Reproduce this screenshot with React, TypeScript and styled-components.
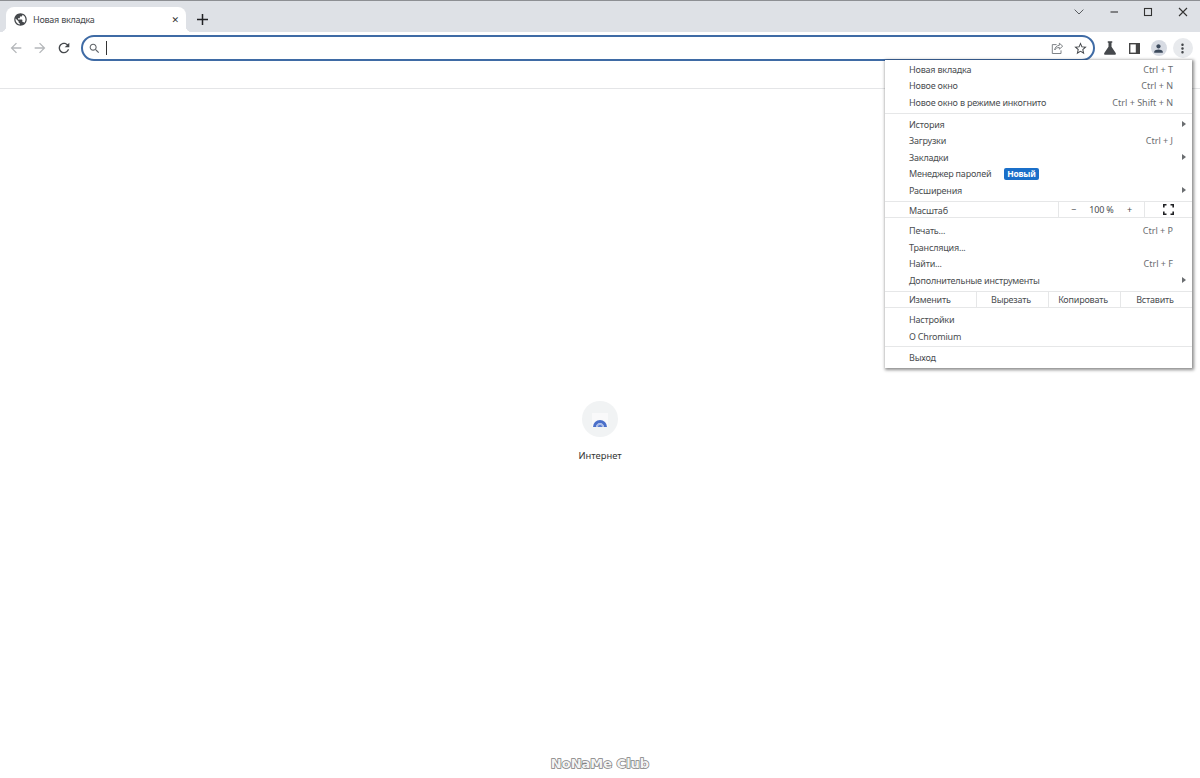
import styled, { createGlobalStyle } from "styled-components"

const GlobalStyle = createGlobalStyle`
  html, body {
    margin: 0;
    padding: 0;
    background: #fff;
    font-family: "Noto Sans", "Open Sans", sans-serif;
    color: #3c4043;
  }
  #root { height: 778px; overflow: hidden; }
`

type MenuRow = { label: string; hint?: string; arrow?: boolean; badge?: string }

const sections: MenuRow[][] = [
  [
    { label: "Новая вкладка", hint: "Ctrl + T" },
    { label: "Новое окно", hint: "Ctrl + N" },
    { label: "Новое окно в режиме инкогнито", hint: "Ctrl + Shift + N" },
  ],
  [
    { label: "История", arrow: true },
    { label: "Загрузки", hint: "Ctrl + J" },
    { label: "Закладки", arrow: true },
    { label: "Менеджер паролей", badge: "Новый" },
    { label: "Расширения", arrow: true },
  ],
]

const sectionsAfterZoom: MenuRow[] = [
  { label: "Печать...", hint: "Ctrl + P" },
  { label: "Трансляция..." },
  { label: "Найти...", hint: "Ctrl + F" },
  { label: "Дополнительные инструменты", arrow: true },
]

const Icon = ({ d, size = 16, color = "#5f6368" }: { d: string; size?: number; color?: string }) => (
  <svg width={size} height={size} viewBox="0 0 24 24" fill={color}>
    <path d={d} />
  </svg>
)

const ICONS = {
  globe: "M12 2C6.48 2 2 6.48 2 12s4.48 10 10 10 10-4.48 10-10S17.52 2 12 2zm-1 17.93c-3.95-.49-7-3.85-7-7.93 0-.62.08-1.21.21-1.79L9 15v1c0 1.1.9 2 2 2v1.93zm6.9-2.54c-.26-.81-1-1.39-1.9-1.39h-1v-3c0-.55-.45-1-1-1H8v-2h2c.55 0 1-.45 1-1V7h2c1.1 0 2-.9 2-2v-.41c2.93 1.19 5 4.06 5 7.41 0 2.08-.8 3.97-2.1 5.39z",
  back: "M20 11H7.83l5.59-5.59L12 4l-8 8 8 8 1.41-1.41L7.83 13H20v-2z",
  forward: "M12 4l-1.41 1.41L16.17 11H4v2h12.17l-5.58 5.59L12 20l8-8z",
  reload: "M17.65 6.35C16.2 4.9 14.21 4 12 4c-4.42 0-7.99 3.58-7.99 8s3.57 8 7.99 8c3.73 0 6.84-2.55 7.73-6h-2.08c-.82 2.33-3.04 4-5.65 4-3.31 0-6-2.69-6-6s2.69-6 6-6c1.66 0 3.14.69 4.22 1.78L13 11h7V4l-2.35 2.35z",
  search: "M15.5 14h-.79l-.28-.27C15.41 12.59 16 11.11 16 9.5 16 5.91 13.09 3 9.5 3S3 5.91 3 9.5 5.91 16 9.5 16c1.61 0 3.09-.59 4.23-1.57l.27.28v.79l5 4.99L20.49 19l-4.99-5zm-6 0C7.01 14 5 11.99 5 9.5S7.01 5 9.5 5 14 7.01 14 9.5 11.99 14 9.5 14z",
  star: "M22 9.24l-7.19-.62L12 2 9.19 8.63 2 9.24l5.46 4.73L5.82 21 12 17.27 18.18 21l-1.63-7.03L22 9.24zM12 15.4l-3.76 2.27 1-4.28-3.32-2.88 4.38-.38L12 6.1l1.71 4.04 4.38.38-3.32 2.88 1 4.28L12 15.4z",
  flask: "M9 3h6v2h-1v5.2l5.6 8.4c.7 1.1 0 2.4-1.3 2.4H5.7c-1.3 0-2-1.3-1.3-2.4L10 10.2V5H9V3z",
  person: "M12 12c2.21 0 4-1.79 4-4s-1.79-4-4-4-4 1.79-4 4 1.79 4 4 4zm0 2c-2.67 0-8 1.34-8 4v2h16v-2c0-2.66-5.33-4-8-4z",
  kebab: "M12 8c1.1 0 2-.9 2-2s-.9-2-2-2-2 .9-2 2 .9 2 2 2zm0 2c-1.1 0-2 .9-2 2s.9 2 2 2 2-.9 2-2-.9-2-2-2zm0 6c-1.1 0-2 .9-2 2s.9 2 2 2 2-.9 2-2-.9-2-2-2z",
}

const ShareIcon = () => (
  <svg width="13" height="13" viewBox="0 0 14 14" fill="none" stroke="#75797d" strokeWidth="1">
    <path d="M9 1.3l3.6 3.2L9 7.7V5.9C6.6 5.9 5 6.9 4 8.6c.3-2.9 2-4.7 5-5V1.3z" strokeLinejoin="round" />
    <path d="M6 2.8H1.4v9.6h9.4V9" />
  </svg>
)

const SidePanelIcon = () => (
  <svg width="11" height="11" viewBox="0 0 11 11">
    <rect x="0.7" y="0.7" width="9.6" height="9.6" fill="#fff" stroke="#444" strokeWidth="1.4" />
    <rect x="6.8" y="0.7" width="3.6" height="9.6" fill="#444" />
  </svg>
)

const FullscreenIcon = () => (
  <svg width="11" height="11" viewBox="0 0 11 11" fill="none" stroke="#202124" strokeWidth="1.6">
    <path d="M.8 3.5V.8h2.7M7.5.8h2.7v2.7M10.2 7.5v2.7H7.5M3.5 10.2H.8V7.5" />
  </svg>
)

const WebTileIcon = () => (
  <svg width="18" height="18" viewBox="0 0 18 18">
    <rect x="1" y="3" width="16" height="14" fill="#f9f9fa" />
    <path d="M2 17a7 7 0 0 1 14 0h-3.2a3.8 3.8 0 0 0-7.6 0z" fill="#4a6fc9" />
    <path d="M5.2 17a3.8 3.8 0 0 1 7.6 0h-1.6a2.2 2.2 0 0 0-4.4 0z" fill="#a9bbe8" />
    <path d="M6.8 17a2.2 2.2 0 0 1 4.4 0z" fill="#5c7fd0" />
  </svg>
)

const App = () => {
  return (
    <Window>
      <GlobalStyle />
      <TabStrip>
        <Tab>
          <Icon d={ICONS.globe} size={15} color="#45484c" />
          <TabTitle>Новая вкладка</TabTitle>
          <TabClose>✕</TabClose>
        </Tab>
        <NewTab>
          <svg width="11" height="11" viewBox="0 0 11 11" stroke="#202124" strokeWidth="1.5">
            <path d="M5.5 0v11M0 5.5h11" />
          </svg>
        </NewTab>
        <WindowControls>
          <WindowButton>
            <svg width="10" height="6" viewBox="0 0 10 6" fill="none" stroke="#5a5d61" strokeWidth="1">
              <path d="M.6.6L5 5l4.4-4.4" />
            </svg>
          </WindowButton>
          <WindowButton>
            <svg width="10" height="10" viewBox="0 0 10 10" stroke="#333" strokeWidth="1.1">
              <path d="M1.5 5h7.5" />
            </svg>
          </WindowButton>
          <WindowButton>
            <svg width="10" height="10" viewBox="0 0 10 10" fill="none" stroke="#333" strokeWidth="1.1">
              <rect x="1.5" y="1.5" width="7" height="7" />
            </svg>
          </WindowButton>
          <WindowButton>
            <svg width="10" height="10" viewBox="0 0 10 10" stroke="#333" strokeWidth="1.1">
              <path d="M1 1l8 8M9 1L1 9" />
            </svg>
          </WindowButton>
        </WindowControls>
      </TabStrip>

      <Toolbar>
        <NavButton>
          <Icon d={ICONS.back} color="#b4b7ba" />
        </NavButton>
        <NavButton>
          <Icon d={ICONS.forward} color="#b4b7ba" />
        </NavButton>
        <NavButton>
          <Icon d={ICONS.reload} color="#45484c" />
        </NavButton>
        <Omnibox>
          <Icon d={ICONS.search} size={13} color="#5f6368" />
          <Caret />
          <OmniboxActions>
            <ShareIcon />
            <Icon d={ICONS.star} size={15} color="#45484c" />
          </OmniboxActions>
        </Omnibox>
        <ToolGroup>
          <ToolButton>
            <Icon d={ICONS.flask} size={18} color="#45484c" />
          </ToolButton>
          <ToolButton>
            <SidePanelIcon />
          </ToolButton>
          <ToolButton>
            <Avatar>
              <Icon d={ICONS.person} size={13} color="#3c4a5c" />
            </Avatar>
          </ToolButton>
          <ToolButton>
            <KebabCircle>
              <Icon d={ICONS.kebab} size={15} color="#45484c" />
            </KebabCircle>
          </ToolButton>
        </ToolGroup>
      </Toolbar>
      <BookmarksBar />

      <Content>
        <Tile>
          <TileCircle>
            <WebTileIcon />
          </TileCircle>
          <TileLabel>Интернет</TileLabel>
        </Tile>
      </Content>

      <Menu>
        {sections.map((rows, i) => (
          <MenuSection key={i}>
            {rows.map((row) => (
              <Row key={row.label} row={row} />
            ))}
          </MenuSection>
        ))}
        <CellRow>
          <CellLabel>Масштаб</CellLabel>
          <ZoomCell>
            <span>−</span>
            <span>100 %</span>
            <span>+</span>
          </ZoomCell>
          <FullscreenCell>
            <FullscreenIcon />
          </FullscreenCell>
        </CellRow>
        <MenuSection $afterCells>
          {sectionsAfterZoom.map((row) => (
            <Row key={row.label} row={row} />
          ))}
        </MenuSection>
        <CellRow>
          <CellLabel>Изменить</CellLabel>
          <EditCell>Вырезать</EditCell>
          <EditCell>Копировать</EditCell>
          <EditCell>Вставить</EditCell>
        </CellRow>
        <MenuSection $afterCells>
          <Row row={{ label: "Настройки" }} />
          <Row row={{ label: "О Chromium" }} />
        </MenuSection>
        <MenuSection>
          <Row row={{ label: "Выход" }} />
        </MenuSection>
      </Menu>

      <Watermark>NoNaMe Club</Watermark>
    </Window>
  )
}

const Row = ({ row }: { row: MenuRow }) => (
  <MenuItem>
    <span>{row.label}</span>
    {row.badge && <Badge>{row.badge}</Badge>}
    {row.hint && <Hint>{row.hint}</Hint>}
    {row.arrow && <Arrow />}
  </MenuItem>
)

const Window = styled.div`
  position: relative;
  width: 1200px;
  height: 778px;
  display: flex;
  flex-direction: column;
  overflow: hidden;
`

const TabStrip = styled.div`
  height: 32px;
  box-sizing: border-box;
  background: #dee1e6;
  border-top: 1px solid #8d8f93;
  padding: 6px 0 0 6px;
  display: flex;
  align-items: flex-end;
`

const Tab = styled.div`
  position: relative;
  width: 180px;
  height: 25px;
  box-sizing: border-box;
  background: #fff;
  border-radius: 8px 8px 0 0;
  padding: 0 7px 0 7px;
  display: flex;
  align-items: center;
  &::before, &::after {
    content: "";
    position: absolute;
    bottom: 0;
    width: 6px;
    height: 6px;
  }
  &::before {
    left: -6px;
    background: radial-gradient(circle at 0 0, transparent 6px, #fff 6.5px);
  }
  &::after {
    right: -6px;
    background: radial-gradient(circle at 100% 0, transparent 6px, #fff 6.5px);
  }
`

const TabTitle = styled.span`
  flex: 1;
  margin-left: 5px;
  font-size: 9px;
  letter-spacing: -0.25px;
  color: #45484c;
`

const TabClose = styled.span`
  font-size: 9px;
  color: #333;
  font-family: "DejaVu Sans", sans-serif;
`

const NewTab = styled.div`
  width: 22px;
  height: 25px;
  margin-left: 5px;
  display: flex;
  align-items: center;
  justify-content: center;
`

const WindowControls = styled.div`
  margin-left: auto;
  align-self: flex-start;
  margin-top: -6px;
  display: flex;
`

const WindowButton = styled.div`
  width: 34.5px;
  height: 22px;
  display: flex;
  align-items: center;
  justify-content: center;
`

const Toolbar = styled.div`
  height: 30px;
  background: #fff;
  padding: 3px 5px 0 4px;
  box-sizing: border-box;
  display: flex;
  align-items: flex-start;
`

const NavButton = styled.div`
  width: 24px;
  height: 26px;
  display: flex;
  align-items: center;
  justify-content: center;
`

const Omnibox = styled.div`
  flex: 1;
  height: 26px;
  margin-left: 5px;
  box-sizing: border-box;
  border: 2px solid #3f6ba5;
  border-radius: 13px;
  padding: 0 5px 0 5px;
  display: flex;
  align-items: center;
`

const Caret = styled.div`
  width: 1px;
  height: 14px;
  margin-left: 5px;
  background: #333;
`

const OmniboxActions = styled.div`
  margin-left: auto;
  display: flex;
  align-items: center;
  gap: 9px;
`

const ToolGroup = styled.div`
  margin-left: 3px;
  display: flex;
`

const ToolButton = styled.div`
  width: 24.3px;
  height: 26px;
  display: flex;
  align-items: center;
  justify-content: center;
`

const Avatar = styled.div`
  width: 16px;
  height: 16px;
  border-radius: 50%;
  background: #d7dbe3;
  display: flex;
  align-items: center;
  justify-content: center;
`

const KebabCircle = styled.div`
  width: 20px;
  height: 20px;
  border-radius: 50%;
  background: #e8eaed;
  display: flex;
  align-items: center;
  justify-content: center;
`

const BookmarksBar = styled.div`
  height: 27px;
  box-sizing: border-box;
  background: #fff;
  border-bottom: 1px solid #e4e5e7;
`

const Content = styled.main`
  flex: 1;
  padding-top: 312px;
  display: flex;
  justify-content: center;
`

const Tile = styled.div`
  display: flex;
  flex-direction: column;
  align-items: center;
`

const TileCircle = styled.div`
  width: 36px;
  height: 36px;
  border-radius: 50%;
  background: #f1f3f4;
  display: flex;
  align-items: center;
  justify-content: center;
`

const TileLabel = styled.div`
  margin-top: 11px;
  font-size: 9.4px;
  line-height: 15px;
  color: #333;
`

const Menu = styled.nav`
  position: absolute;
  top: 60px;
  left: 885px;
  width: 307px;
  height: 308px;
  box-sizing: border-box;
  background: #fff;
  box-shadow: 1px 1px 3px 1px rgba(0, 0, 0, 0.45);
  display: flex;
  flex-direction: column;
  font-size: 9px;
  letter-spacing: -0.2px;
  color: #4a4d50;
`

const MenuSection = styled.div<{ $afterCells?: boolean }>`
  padding: ${(p) => (p.$afterCells ? "4.1px 0 1.7px" : "1.7px 0 2.5px")};
  &:first-child {
    padding-top: 1.2px;
  }
  & + & {
    border-top: 1px solid #e6e7e8;
  }
`

const MenuItem = styled.div`
  height: 16.5px;
  padding: 0 19px 0 24px;
  display: flex;
  align-items: center;
  position: relative;
`

const Hint = styled.span`
  margin-left: auto;
  letter-spacing: 0;
  color: #6a6d70;
`

const Arrow = styled.span`
  margin-left: auto;
  margin-right: -13px;
  width: 0;
  height: 0;
  border-left: 4px solid #6a6d70;
  border-top: 3.5px solid transparent;
  border-bottom: 3.5px solid transparent;
`

const Badge = styled.span`
  margin-left: 13px;
  padding: 0 3px;
  height: 12px;
  line-height: 12px;
  border-radius: 2px;
  background: #1a6fc9;
  color: #fff;
  font-size: 8.4px;
  font-weight: 700;
`

const CellRow = styled.div`
  height: 18px;
  margin-top: 0.5px;
  box-sizing: border-box;
  border-top: 1px solid #e6e7e8;
  border-bottom: 1px solid #e6e7e8;
  display: flex;
  align-items: stretch;
`

const CellLabel = styled.div`
  flex: 1;
  padding: 1px 0 0 24px;
  display: flex;
  align-items: center;
`

const ZoomCell = styled.div`
  width: 86px;
  box-sizing: border-box;
  border-left: 1px solid #e6e7e8;
  padding: 0 12px;
  display: flex;
  align-items: center;
  justify-content: space-between;
`

const FullscreenCell = styled.div`
  width: 48px;
  box-sizing: border-box;
  border-left: 1px solid #e6e7e8;
  padding-right: 1px;
  display: flex;
  align-items: center;
  justify-content: center;
`

const EditCell = styled.div`
  width: 72px;
  box-sizing: border-box;
  border-left: 1px solid #e6e7e8;
  padding-right: 3px;
  display: flex;
  align-items: center;
  justify-content: center;
`

const Watermark = styled.div`
  position: absolute;
  left: 0;
  right: 0;
  bottom: 5px;
  text-align: center;
  font-family: "DejaVu Sans", sans-serif;
  font-weight: 700;
  font-size: 13px;
  line-height: 18px;
  color: #f4f4f4;
  -webkit-text-stroke: 1.5px #808080;
  paint-order: stroke fill;
`

export default App
